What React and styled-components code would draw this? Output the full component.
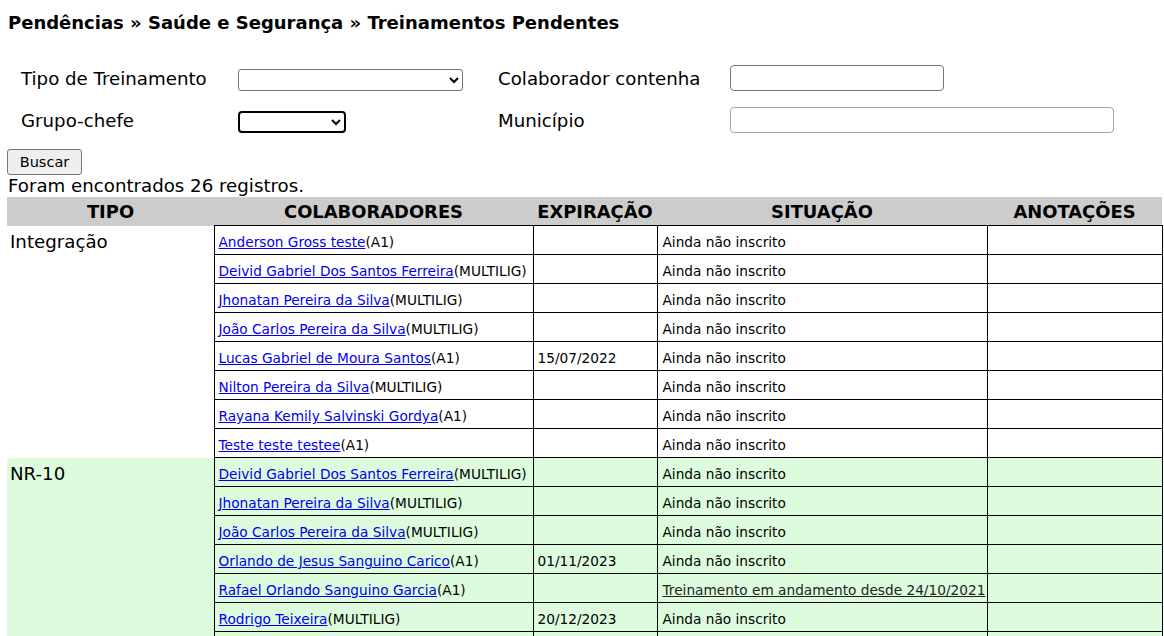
import React from "react";
import styled, { createGlobalStyle } from "styled-components";

const Global = createGlobalStyle`
  html { overflow: hidden; }
  body {
    margin: 0;
    background: #fff;
    color: #000;
    font-family: "DejaVu Sans", Verdana, sans-serif;
  }
`;

const Page = styled.div`
  padding: 0 7px;
`;

const Title = styled.h1`
  margin: 12px 0 0 1px;
  font-size: 18px;
  line-height: 22px;
  font-weight: bold;
`;

const FilterGrid = styled.div`
  display: grid;
  grid-template-columns: 217px 260px 232px auto;
  grid-auto-rows: 26px;
  row-gap: 16px;
  align-items: center;
  margin-top: 31px;
  padding-left: 14px;
`;

const Label = styled.label`
  font-size: 18.2px;
  line-height: 22px;
  padding-top: 2px;
`;

const Select = styled.select`
  width: ${(p) => p.$w}px;
  height: 22px;
  box-sizing: border-box;
  border: ${(p) => (p.$focus ? "2px solid #000" : "1px solid #767676")};
  border-radius: ${(p) => (p.$focus ? 4 : 3)}px;
  background: #fff;
  font-family: "DejaVu Sans", sans-serif;
  font-size: 13px;
  padding: 0 2px;
  justify-self: start;
  margin-top: ${(p) => p.$dy || 0}px;
`;

const TextInput = styled.input`
  width: ${(p) => p.$w}px;
  height: 26px;
  box-sizing: border-box;
  border: 1px solid ${(p) => (p.$light ? "#a5a5a5" : "#767676")};
  border-radius: 4px;
  background: #fff;
  padding: 0 4px;
  font-size: 13px;
  justify-self: start;
`;

const Button = styled.button`
  margin-top: 16px;
  width: 75px;
  height: 26px;
  box-sizing: border-box;
  background: #efefef;
  border: 1px solid #767676;
  border-radius: 3px;
  font-family: "DejaVu Sans", sans-serif;
  font-size: 14.5px;
  color: #000;
  padding: 0;
  display: block;
`;

const Count = styled.div`
  font-size: 18.2px;
  line-height: 22px;
  padding-left: 1px;
`;

const Table = styled.table`
  border-collapse: collapse;
  table-layout: fixed;
  width: 1155px;
`;

const Th = styled.th`
  background: #cccccc;
  font-size: 17.9px;
  font-weight: bold;
  line-height: 22px;
  padding: 4px 0 2px;
  text-align: center;
`;

const Tr = styled.tr`
  background: ${(p) => (p.$green ? "#ddfcdd" : "#fff")};
`;

const TypeCell = styled.td`
  vertical-align: top;
  font-size: 18.2px;
  line-height: 22px;
  padding: 5px 3px 3px;
  border: none;
`;

const Td = styled.td`
  border: 1px solid #000;
  font-size: 13.7px;
  line-height: 16px;
  padding: 8px ${(p) => p.$pl || 4}px 4px;
  white-space: nowrap;
  overflow: hidden;
`;

const NameLink = styled.a`
  color: #0000ee;
  text-decoration: underline;
`;

const StatusLink = styled.a`
  color: #222;
  text-decoration: underline;
`;

const groups = [
  {
    tipo: "Integração",
    green: false,
    rows: [
      ["Anderson Gross teste", "A1", "", "Ainda não inscrito"],
      ["Deivid Gabriel Dos Santos Ferreira", "MULTILIG", "", "Ainda não inscrito"],
      ["Jhonatan Pereira da Silva", "MULTILIG", "", "Ainda não inscrito"],
      ["João Carlos Pereira da Silva", "MULTILIG", "", "Ainda não inscrito"],
      ["Lucas Gabriel de Moura Santos", "A1", "15/07/2022", "Ainda não inscrito"],
      ["Nilton Pereira da Silva", "MULTILIG", "", "Ainda não inscrito"],
      ["Rayana Kemily Salvinski Gordya", "A1", "", "Ainda não inscrito"],
      ["Teste teste testee", "A1", "", "Ainda não inscrito"],
    ],
  },
  {
    tipo: "NR-10",
    green: true,
    rows: [
      ["Deivid Gabriel Dos Santos Ferreira", "MULTILIG", "", "Ainda não inscrito"],
      ["Jhonatan Pereira da Silva", "MULTILIG", "", "Ainda não inscrito"],
      ["João Carlos Pereira da Silva", "MULTILIG", "", "Ainda não inscrito"],
      ["Orlando de Jesus Sanguino Carico", "A1", "01/11/2023", "Ainda não inscrito"],
      ["Rafael Orlando Sanguino Garcia", "A1", "", "link:Treinamento em andamento desde 24/10/2021"],
      ["Rodrigo Teixeira", "MULTILIG", "20/12/2023", "Ainda não inscrito"],
      ["Teste teste testee", "A1", "", "Ainda não inscrito"],
    ],
  },
];

export default function App() {
  return (
    <Page>
      <Global />
      <Title>Pendências » Saúde e Segurança » Treinamentos Pendentes</Title>
      <FilterGrid>
        <Label>Tipo de Treinamento</Label>
        <Select $w={225} $dy={3}>
          <option></option>
        </Select>
        <Label>Colaborador contenha</Label>
        <TextInput $w={214} />
        <Label>Grupo-chefe</Label>
        <Select $w={108} $focus $dy={3}>
          <option></option>
        </Select>
        <Label>Município</Label>
        <TextInput $w={384} $light />
      </FilterGrid>
      <Button>Buscar</Button>
      <Count>Foram encontrados 26 registros.</Count>
      <Table>
        <colgroup>
          <col style={{ width: 207 }} />
          <col style={{ width: 319 }} />
          <col style={{ width: 124 }} />
          <col style={{ width: 330 }} />
          <col style={{ width: 175 }} />
        </colgroup>
        <thead>
          <tr>
            <Th>TIPO</Th>
            <Th>COLABORADORES</Th>
            <Th>EXPIRAÇÃO</Th>
            <Th>SITUAÇÃO</Th>
            <Th>ANOTAÇÕES</Th>
          </tr>
        </thead>
        <tbody>
          {groups.map((g) =>
            g.rows.map((r, i) => (
              <Tr key={g.tipo + i} $green={g.green}>
                {i === 0 && <TypeCell rowSpan={g.rows.length}>{g.tipo}</TypeCell>}
                <Td>
                  <NameLink href="#">{r[0]}</NameLink>({r[1]})
                </Td>
                <Td>{r[2]}</Td>
                <Td $pl={5}>
                  {r[3].startsWith("link:") ? (
                    <StatusLink href="#">{r[3].slice(5)}</StatusLink>
                  ) : (
                    r[3]
                  )}
                </Td>
                <Td></Td>
              </Tr>
            ))
          )}
        </tbody>
      </Table>
    </Page>
  );
}
